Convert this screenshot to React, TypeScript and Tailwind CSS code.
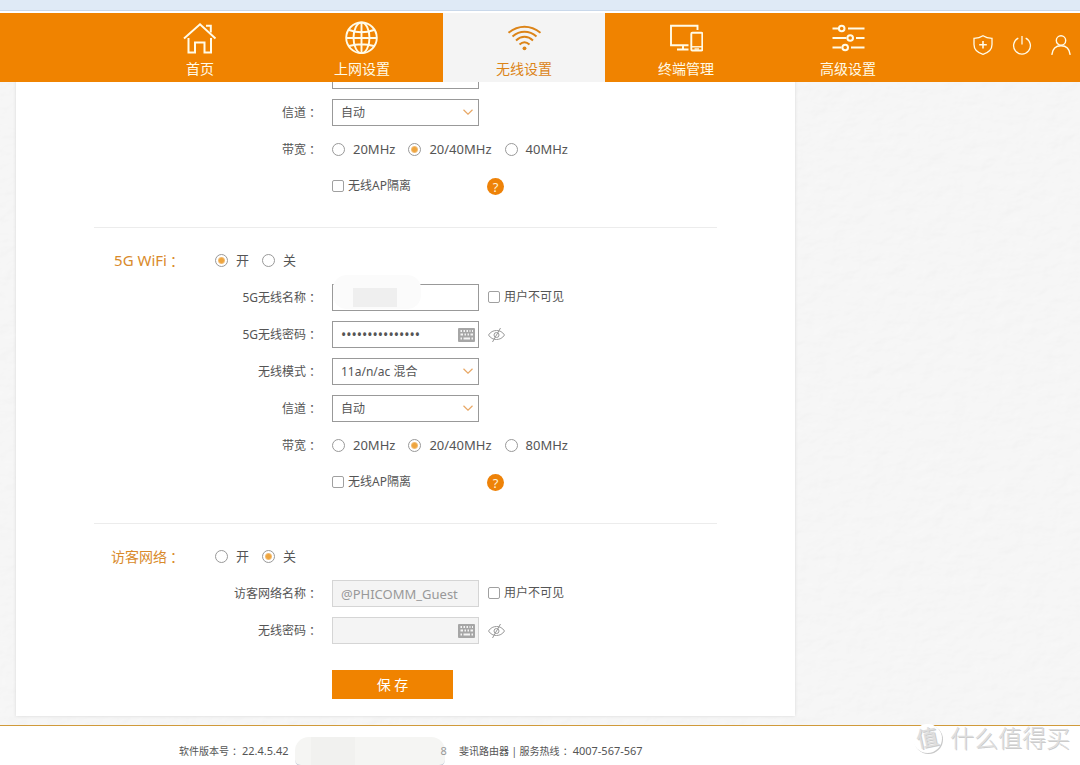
import React from "react";

const cjk = "font-['Noto_Sans','Noto_Sans_CJK_SC',sans-serif]";

function Colon() {
  return <span className="-mr-[3px] pl-[3px]">：</span>;
}

function HomeIcon() {
  return (
    <svg viewBox="0 0 34 34" className="size-[34px]" fill="none" stroke="currentColor" strokeWidth="2">
      <path d="M1 17.500 17 3.300 32.500 17.500" />
      <path d="M23 4.800H27.800V11.500" />
      <path d="M5.500 17V31.500H12V21.500H21.500V31.500H28V17" />
    </svg>
  );
}

function GlobeIcon() {
  return (
    <svg viewBox="0 0 34 34" className="size-[34px]" fill="none" stroke="currentColor" strokeWidth="1.900">
      <circle cx="16.500" cy="16.800" r="15.300" />
      <ellipse cx="16.500" cy="16.800" rx="8" ry="15.300" />
      <path d="M16.500 1.500V32M1.500 17H32M4 9Q16.500 13.500 29 9M4 25Q16.500 21.500 29 25" />
    </svg>
  );
}

function WifiIcon() {
  return (
    <svg viewBox="0 0 34 34" className="size-[34px]" fill="none" stroke="currentColor" strokeWidth="2">
      <path d="M1.500 11.800Q9 5.800 17.500 5.800T33.500 11.800" />
      <path d="M5.500 15.500Q11 10.800 17.500 10.800T29.500 15.500" />
      <path d="M9 19.400Q13 15.800 17.500 15.800T26 19.400" />
      <path d="M12.500 23.500Q15 21.200 17.500 21.200T22.500 23.500" />
      <circle cx="17.500" cy="27.300" r="1.900" fill="currentColor" stroke="none" />
    </svg>
  );
}

function DevicesIcon() {
  return (
    <svg viewBox="0 0 34 34" className="size-[34px]" fill="none" stroke="currentColor" strokeWidth="1.900">
      <path d="M28.500 9V4.800H2V24.300H19.500" />
      <path d="M14 24.500V28M8 28.500H19.500" />
      <rect x="22.300" y="11.700" width="11" height="17.800" rx="1" />
      <path d="M22.300 25.800H33.300" strokeWidth="1.400" />
      <path d="M25.500 28H30" strokeWidth="1.400" />
    </svg>
  );
}

function SlidersIcon() {
  return (
    <svg viewBox="0 0 34 34" className="size-[34px]" fill="none" stroke="currentColor" strokeWidth="2">
      <path d="M1.500 7.500H7.500M17 7.500H33.500M1.500 17H15.500M25 17H33.500M1.500 26.500H10.500M20 26.500H33.500" />
      <circle cx="10.700" cy="7.500" r="2.800" />
      <circle cx="19.200" cy="17" r="2.800" />
      <circle cx="14.200" cy="26.500" r="2.800" />
    </svg>
  );
}

const tabs = [
  { label: "首页", Icon: HomeIcon, active: false },
  { label: "上网设置", Icon: GlobeIcon, active: false },
  { label: "无线设置", Icon: WifiIcon, active: true },
  { label: "终端管理", Icon: DevicesIcon, active: false },
  { label: "高级设置", Icon: SlidersIcon, active: false },
];

function NavBar() {
  return (
    <nav className="flex items-stretch bg-[#f08300] pl-[119px] text-[#fffbe8]">
      {tabs.map(({ label, Icon, active }) => (
        <a
          key={label}
          href="#"
          className={
            active
              ? "flex w-[162px] flex-col items-center gap-1 bg-[#f4f4f4] pt-2 pb-[3px] text-sm leading-5 text-[#dc8418]"
              : "flex w-[162px] flex-col items-center gap-1 pt-2 pb-[3px] text-sm leading-5"
          }
        >
          <Icon />
          {label}
        </a>
      ))}
      <div className="ml-auto flex items-center gap-[19px] pr-[9px] pb-1.5">
        <button type="button" aria-label="安全">
          <svg viewBox="0 0 20 20" className="size-5" fill="none" stroke="currentColor" strokeWidth="1.300">
            <path d="M10 .800Q13.500 3.300 19 3.300V9.500C19 14.500 15 17.800 10 19.300 5 17.800 1 14.500 1 9.500V3.300Q6.500 3.300 10 .800Z" />
            <path d="M10 6V13.500M6.200 9.700H13.800" strokeWidth="1.600" />
          </svg>
        </button>
        <button type="button" aria-label="电源">
          <svg viewBox="0 0 20 20" className="size-5" fill="none" stroke="currentColor" strokeWidth="1.300">
            <path d="M6.300 3.100A8.400 8.400 0 1 0 13.700 3.100M10 1V9.500" />
          </svg>
        </button>
        <button type="button" aria-label="账户">
          <svg viewBox="0 0 20 20" className="size-5" fill="none" stroke="currentColor" strokeWidth="1.400">
            <circle cx="10" cy="5.500" r="4.700" />
            <path d="M.800 19.800C1.500 14 5 10.800 10 10.800S18.500 14 19.200 19.800" />
          </svg>
        </button>
      </div>
    </nav>
  );
}

function Row({ label, htmlFor, children }: { label?: string; htmlFor?: string; children: React.ReactNode }) {
  return (
    <div className="flex h-[27px] items-center gap-3.5">
      <div className="w-[302px] shrink-0 text-right">
        {label && (
          <label htmlFor={htmlFor}>
            {label}
            <Colon />
          </label>
        )}
      </div>
      {children}
    </div>
  );
}

function SelectBox({ id, value, label }: { id: string; value: string; label?: string }) {
  return (
    <div className="relative w-[147px]">
      <select
        id={id}
        aria-label={label}
        className="block h-[27px] w-full appearance-none border border-[#999] bg-white pr-6 pl-2"
      >
        <option>{value}</option>
      </select>
      <svg
        viewBox="0 0 10 6"
        className="pointer-events-none absolute top-[10px] right-[6px] h-[6px] w-[10px]"
        fill="none"
        stroke="#e8a765"
        strokeWidth="1.200"
      >
        <path d="M.500.800 5 5.200 9.500.800" />
      </svg>
    </div>
  );
}

function Radio({ name, label, checked }: { name: string; label: string; checked?: boolean }) {
  return (
    <label className="flex items-center gap-2 text-[13px]">
      <input
        type="radio"
        name={name}
        defaultChecked={checked}
        className="size-[13px] appearance-none rounded-full border border-[#999] bg-white checked:bg-[radial-gradient(circle,#eea53f_2px,#f3bd74_3px,transparent_4px)]"
      />
      {label}
    </label>
  );
}

function Check({ label }: { label: string }) {
  return (
    <label className="flex items-center gap-1 pb-[2px]">
      <input type="checkbox" className="size-3 appearance-none rounded-[2px] border border-[#a0a0a0] bg-white" />
      {label}
    </label>
  );
}

function Toggle({ name, on }: { name: string; on: boolean }) {
  return (
    <div className="flex items-center gap-[13px]">
      <Radio name={name} label="开" checked={on} />
      <Radio name={name} label="关" checked={!on} />
    </div>
  );
}

function SectionHead({ title, name, on, big }: { title: string; name: string; on: boolean; big?: boolean }) {
  return (
    <div className="flex h-[27px] items-center gap-[34px]">
      <h2 className="w-[165px] text-right text-sm text-[#d98a2b]">
        <span className={big ? "text-[15px]" : "text-sm"}>{title}</span>
        <Colon />
      </h2>
      <Toggle name={name} on={on} />
    </div>
  );
}

function Bandwidth({ name, top }: { name: string; top: string }) {
  return (
    <Row label="带宽">
      <div className="flex items-center gap-[13px]">
        <Radio name={name} label="20MHz" />
        <Radio name={name} label="20/40MHz" checked />
        <Radio name={name} label={top} />
      </div>
    </Row>
  );
}

function Isolation() {
  return (
    <Row>
      <div className="flex w-[172px] items-center justify-between">
        <Check label="无线AP隔离" />
        <button
          type="button"
          aria-label="帮助"
          className="flex size-[17px] items-center justify-center rounded-full bg-[#ee8208] text-[13px] leading-4 text-[#fff3d8]"
        >
          ?
        </button>
      </div>
    </Row>
  );
}

function Keyboard() {
  return (
    <svg viewBox="0 0 17 14" className="pointer-events-none absolute top-[7px] right-1 h-[14px] w-[17px]">
      <rect width="17" height="14" rx="1" fill="#a6a6a6" />
      <path
        d="M2.500 3H4M5.500 3H7M8.500 3H10M11.500 3H12.500M14 3H15M2.500 6.500H5M6.500 6.500H8M9.500 6.500H11M12.500 6.500H15M2.500 10.500H4M5.500 10.500H12M13.500 10.500H15"
        stroke="#f4f4f4"
        strokeWidth="2"
      />
    </svg>
  );
}

function EyeOff() {
  return (
    <button type="button" aria-label="显示密码">
      <svg viewBox="0 0 17 16" className="h-4 w-[17px]" fill="none" stroke="#999" strokeWidth="1">
        <path d="M.500 8C2.500 4.800 5.500 3.500 8.500 3.500S14.500 4.800 16.500 8C14.500 11.200 11.500 12.500 8.500 12.500S2.500 11.200.500 8Z" />
        <circle cx="8.500" cy="8" r="2.500" />
        <path d="M12.500 1 4.500 15" />
      </svg>
    </button>
  );
}

function Divider() {
  return <hr className="mx-[78px] mt-[17px] mb-[9px] border-[#ececec]" />;
}

function Paper() {
  return (
    <svg className="absolute inset-0 -z-10 size-full" aria-hidden="true">
      <filter id="paper" x="0" y="0" width="100%" height="100%">
        <feTurbulence type="fractalNoise" baseFrequency="0.050 0.080" numOctaves="3" seed="4" result="n" />
        <feDiffuseLighting in="n" surfaceScale="0.600" diffuseConstant="1" lightingColor="#ffffff">
          <feDistantLight azimuth="225" elevation="70" />
        </feDiffuseLighting>
        <feComponentTransfer>
          <feFuncR type="linear" slope="0.500" intercept="0.450" />
          <feFuncG type="linear" slope="0.500" intercept="0.450" />
          <feFuncB type="linear" slope="0.500" intercept="0.450" />
        </feComponentTransfer>
      </filter>
      <rect width="100%" height="100%" filter="url(#paper)" />
    </svg>
  );
}

export default function App() {
  return (
    <div className={`relative isolate flex min-h-screen flex-col bg-[#f4f4f4] text-xs text-[#555] ${cjk}`}>
      <div className="h-[13px] border-b-2 border-white bg-[#dfeaf6]">
        <div className="h-full border-b border-[#c9d8ea]" />
      </div>
      <NavBar />
      <main className="relative isolate flex-1 overflow-hidden pb-[9px]">
        <Paper />
        <form
          className="-mt-5 ml-4 flex w-[779px] max-w-full flex-col gap-2.5 bg-white pb-[17px] shadow-[0_0_3px_#d8d8d8]"
          onSubmit={(e) => e.preventDefault()}
        >
          <Row>
            <SelectBox id="mode24" value="" label="无线模式" />
          </Row>
          <Row label="信道" htmlFor="channel24">
            <SelectBox id="channel24" value="自动" />
          </Row>
          <Bandwidth name="bw24" top="40MHz" />
          <Isolation />
          <Divider />
          <SectionHead title="5G WiFi" name="wifi5" on big />
          <Row label="5G无线名称" htmlFor="ssid5">
            <div className="relative w-[147px]">
              <input id="ssid5" type="text" className="block h-[27px] w-full border border-[#999] bg-white px-2" />
              <div className="absolute -top-[9px] left-px flex h-[34px] w-[88px] items-end rounded-[14px] bg-[#fbfbfb] pb-[2px] pl-5">
                <div className="h-[19px] w-[44px] bg-[#efefef]" />
              </div>
            </div>
            <div className="-ml-[5px]">
              <Check label="用户不可见" />
            </div>
          </Row>
          <Row label="5G无线密码" htmlFor="pwd5">
            <div className="relative w-[147px]">
              <input
                id="pwd5"
                type="password"
                defaultValue="123456789012345"
                className="block h-[27px] w-full border border-[#999] bg-white pr-6 pl-2 text-sm"
              />
              <Keyboard />
            </div>
            <div className="-ml-[5px] flex">
              <EyeOff />
            </div>
          </Row>
          <Row label="无线模式" htmlFor="mode5">
            <SelectBox id="mode5" value="11a/n/ac 混合" />
          </Row>
          <Row label="信道" htmlFor="channel5">
            <SelectBox id="channel5" value="自动" />
          </Row>
          <Bandwidth name="bw5" top="80MHz" />
          <Isolation />
          <Divider />
          <SectionHead title="访客网络" name="guest" on={false} />
          <Row label="访客网络名称" htmlFor="guestName">
            <input
              id="guestName"
              type="text"
              disabled
              defaultValue="@PHICOMM_Guest"
              className="block h-[27px] w-[147px] border border-[#d5d5d5] bg-[#f4f4f4] px-2 text-[13px] text-[#999]"
            />
            <div className="-ml-[5px]">
              <Check label="用户不可见" />
            </div>
          </Row>
          <Row label="无线密码" htmlFor="guestPwd">
            <div className="relative w-[147px]">
              <input
                id="guestPwd"
                type="password"
                disabled
                className="block h-[27px] w-full border border-[#d5d5d5] bg-[#f4f4f4] pr-6 pl-2"
              />
              <Keyboard />
            </div>
            <div className="-ml-[5px] flex">
              <EyeOff />
            </div>
          </Row>
          <button type="submit" className="mt-4 ml-[316px] h-[29px] w-[121px] bg-[#f08300] text-sm text-white">
            保 存
          </button>
        </form>
      </main>
      <footer className="relative flex h-10 items-center whitespace-nowrap border-t border-t-[#d09a3a] bg-white pt-3 pl-[179px] text-[11px]">
        <span>
          <span className="text-[10px]">
            软件版本号
            <Colon />
          </span>
          <span className="pl-[3px]">22.4.5.42</span>
        </span>
        <div className="ml-1.5 flex h-[29px] w-[150px] shrink-0 rounded-t-[14px] rounded-b-md border-b border-b-[#c5cad6] bg-[#f5f5f3] pl-4">
          <div className="h-full w-11 bg-[#f1f1ef]" />
        </div>
        <span className="-ml-1 text-[#999]">8</span>
        <span className="ml-3">
          <span className="text-[10px]">
            斐讯路由器 | 服务热线
            <Colon />
          </span>
          <span className="pl-[3px]">4007-567-567</span>
        </span>
        <div className="absolute -top-1 right-2.5 flex items-center gap-2 text-[#dedede] [text-shadow:1px_1px_0_#cccccc]">
          <span className="flex size-[29px] items-center justify-center rounded-full bg-white text-[22px] shadow-[1px_1px_0_#c8c8c8]">
            <span className="-rotate-12">值</span>
          </span>
          <span className="text-[24px] leading-8 font-light">什么值得买</span>
        </div>
      </footer>
    </div>
  );
}
